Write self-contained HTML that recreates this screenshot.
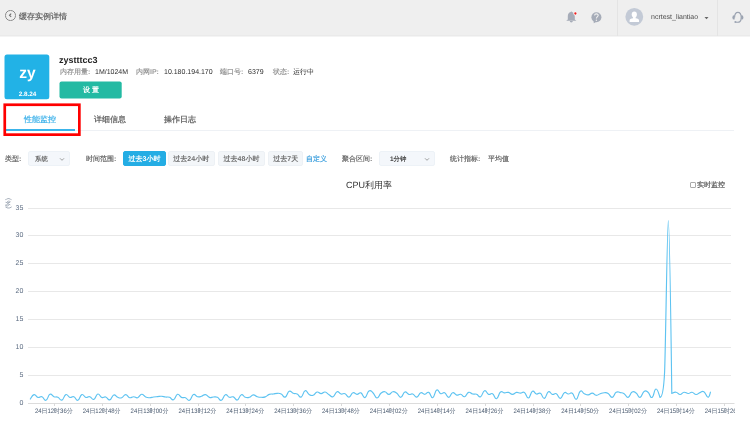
<!DOCTYPE html>
<html><head><meta charset="utf-8">
<style>
*{margin:0;padding:0;box-sizing:border-box}
body>*{will-change:transform}
html,body{text-rendering:geometricPrecision;width:750px;height:436px;overflow:hidden;background:#fff;font-family:"Liberation Sans",sans-serif;color:#333}
.a{position:absolute;white-space:nowrap}
.hdr{position:absolute;left:0;top:0;width:750px;height:37px;background:#efefef;border-bottom:1px solid #f4f4f4;box-shadow:inset 0 -1px 0 #eaeaea}
.vdiv{position:absolute;top:0;width:1px;height:36px;background:#e4e4e4}
.back{position:absolute;left:5px;top:10.3px;width:10.6px;height:10.6px;border:1px solid #8a8a8a;border-radius:50%}
.ttl{left:19px;top:9.6px;font-size:8px;line-height:14px;color:#6e6e6e;font-weight:bold}
.logo{position:absolute;left:4.5px;top:54.4px;width:45px;height:45px;color:#fff;text-align:center}
.logo .zy{position:absolute;left:0;width:45px;top:60px;font-size:16px;font-weight:bold}
.name{left:59.1px;top:55px;font-size:9px;font-weight:bold;color:#222;line-height:11px}
.info{top:68px;font-size:7px;line-height:9px}
.lbl{color:#9c9c9c;font-weight:bold}
.val{color:#2e2e2e}
.btn{position:absolute;left:59.5px;top:81.5px;width:62.2px;height:17px;color:#fff;font-size:7px;text-align:center;line-height:17px;font-weight:bold}
.tab{top:113.7px;font-size:8px;line-height:12px;color:#6a6a6a;font-weight:bold}
.tabline{position:absolute;left:6px;top:130px;width:728.4px;height:1px;background:#eef1f5}
.tabul{position:absolute;left:6px;top:129px;width:68.7px;height:2px;background:#3ab4ea}
.redbox{position:absolute;left:3.4px;top:103.4px;width:77.3px;height:32.6px;border:2.7px solid #f00}
.flt{top:154.5px;font-size:7px;line-height:9px;color:#717171;font-weight:bold}
.sel{position:absolute;top:151px;height:15.4px;background:#f4f7fb;border:1px solid #edf2f7;border-radius:2px}
.tb{position:absolute;top:151.3px;height:14.6px;background:#f3f6f9;border:1px solid #edf1f5;border-radius:2px;font-size:7px;line-height:15px;text-align:center;color:#6e6e6e;font-weight:bold}
.tb.on{background:#24ade4;border-color:#24ade4;color:#fff;font-weight:bold}
.chart{position:absolute;left:0;top:0}
.yl{font-size:7px;fill:#5d6d83}
.xl{font-size:6.4px;fill:#4b5b70}
.yn{font-size:6.8px;fill:#5d6d82}
</style></head><body>
<div class="hdr"></div>
<div class="back"></div>
<svg class="a" style="left:5px;top:10.3px" width="11" height="11" viewBox="0 0 11 11"><path d="M6.2,3.7 L4.5,5.3 L6.2,6.9" fill="none" stroke="#6a6a6a" stroke-width="1.05"/></svg>
<div class="a ttl">缓存实例详情</div>

<!-- header right -->
<svg class="a" style="left:560px;top:5px" width="50" height="25" viewBox="0 0 50 25">
 <path d="M11.3,6.2 L10.7,7 C8.8,7.5 7.8,9 7.8,11.5 L7.8,14.6 L6.2,15.7 L16.4,15.7 L14.8,14.6 L14.8,11.5 C14.8,9 13.8,7.5 11.9,7 Z" fill="#a6acb8"/>
 <path d="M9.9,16 L12.7,16 L12.7,16.8 Q11.3,18 9.9,16.8 Z" fill="#a6acb8"/>
 <circle cx="15.4" cy="8.5" r="2.0" fill="#f7f7f7"/>
 <circle cx="15.4" cy="8.5" r="1.15" fill="#f01c1c"/>
 <circle cx="36.4" cy="12.3" r="5" fill="#a6acb8"/>
 <path d="M33.6,15.5 L33.8,18.2 L36.6,16.8 Z" fill="#a6acb8"/>
 <path d="M34.6,10.4 C34.6,8.3 38.2,8.3 38.2,10.3 C38.2,11.6 36.4,11.8 36.4,13.6" fill="none" stroke="#f0f0f0" stroke-width="1.15"/>
 <circle cx="36.4" cy="15.2" r="0.7" fill="#f0f0f0"/>
</svg>
<div class="vdiv" style="left:616.5px"></div>
<div class="vdiv" style="left:717px"></div>
<svg class="a" style="left:624px;top:7px" width="22" height="22" viewBox="0 0 22 22">
 <circle cx="10.3" cy="9.8" r="8.9" fill="#c3cad6"/>
 <ellipse cx="10.3" cy="7.6" rx="2.6" ry="3.1" fill="#fff"/>
 <path d="M9.1,10 L11.5,10 L11.6,11.3 C13.8,11.7 15,12.2 15,13.3 L15,14.9 L5.6,14.9 L5.6,13.3 C5.6,12.2 6.8,11.7 9,11.3 Z" fill="#fff"/>
</svg>
<div class="a" style="left:650.7px;top:13px;font-size:7px;line-height:10px;color:#4e4e4e">ncrtest_liantiao</div>
<svg class="a" style="left:703px;top:14.5px" width="8" height="6" viewBox="0 0 8 6"><path d="M1.5,2 L5.5,2 L3.5,4.3 Z" fill="#666"/></svg>
<svg class="a" style="left:728px;top:8px" width="20" height="18" viewBox="0 0 20 18">
 <path d="M6.6,9.6 C6.6,2.7 13.2,2.7 13.2,9.6 C13.2,14.6 10.8,14.5 7.6,14.1" fill="none" stroke="#9ba3b1" stroke-width="1.15"/>
 <circle cx="7.3" cy="14" r="0.9" fill="#9ba3b1"/>
 <path d="M6.6,7.2 L6,7.2 Q4.4,7.2 4.4,9.4 Q4.4,11.6 6,11.6 L6.6,11.6 Z" fill="#9ba3b1"/>
 <path d="M13.2,7.2 L13.8,7.2 Q15.4,7.2 15.4,9.4 Q15.4,11.6 13.8,11.6 L13.2,11.6 Z" fill="#9ba3b1"/>
</svg>

<!-- instance -->
<svg class="a" style="left:0;top:0" width="130" height="110" viewBox="0 0 130 110"><rect x="4.5" y="54.4" width="44.8" height="44.9" rx="2.5" fill="#22b2e6"/><rect x="59.5" y="81.5" width="62.2" height="17.1" rx="2" fill="#23baa3"/></svg>
<div class="logo"><div class="a" style="left:0;width:45px;top:9.7px;font-size:15.5px;line-height:20px;font-weight:bold;text-align:center">zy</div>
<div class="a" style="left:0;width:45px;top:36.5px;font-size:6.3px;line-height:8px;font-weight:bold;text-align:center">2.8.24</div></div>
<div class="a name">zystttcc3</div>
<div class="a info lbl" style="left:59.5px">内存用量:</div>
<div class="a info val" style="left:95px">1M/1024M</div>
<div class="a info lbl" style="left:135.9px">内网IP:</div>
<div class="a info val" style="left:163.9px">10.180.194.170</div>
<div class="a info lbl" style="left:220px">端口号:</div>
<div class="a info val" style="left:247.9px">6379</div>
<div class="a info lbl" style="left:272.7px">状态:</div>
<div class="a info val" style="left:293.2px">运行中</div>
<div class="btn">设&nbsp;置</div>

<!-- tabs -->
<div class="tabline"></div>
<div class="a tab" style="left:23.7px;color:#4db8ec">性能监控</div>
<div class="a tab" style="left:93.6px">详细信息</div>
<div class="a tab" style="left:163.6px">操作日志</div>
<div class="tabul"></div>
<svg class="a" style="left:0;top:95px" width="100" height="50" viewBox="0 95 100 50"><rect x="4.75" y="104.75" width="74.6" height="29.9" fill="none" stroke="#ff0000" stroke-width="2.7"/></svg>

<!-- filters -->
<div class="a flt" style="left:4.8px">类型:</div>
<div class="sel" style="left:28px;width:42.4px"></div>
<div class="a flt" style="left:34.8px;top:154.5px;font-size:6.4px;color:#707070">系统</div>
<svg class="a" style="left:59.3px;top:157px" width="6" height="5" viewBox="0 0 6 5"><path d="M1,1.3 L3,3.3 L5,1.3" fill="none" stroke="#888" stroke-width="0.8"/></svg>
<div class="a flt" style="left:85.5px">时间范围:</div>
<div class="tb on" style="left:123px;width:43px">过去3小时</div>
<div class="tb" style="left:168.4px;width:46.5px">过去24小时</div>
<div class="tb" style="left:217.8px;width:47px">过去48小时</div>
<div class="tb" style="left:267.5px;width:35.4px">过去7天</div>
<div class="a flt" style="left:306px;color:#4aa6e0">自定义</div>
<div class="a flt" style="left:342.2px">聚合区间:</div>
<div class="sel" style="left:378.9px;width:56.3px"></div>
<div class="a flt" style="left:390.2px;top:154.5px;font-size:6.4px;color:#4a4a4a">1分钟</div>
<svg class="a" style="left:423.5px;top:157px" width="6" height="5" viewBox="0 0 6 5"><path d="M1,1.3 L3,3.3 L5,1.3" fill="none" stroke="#888" stroke-width="0.8"/></svg>
<div class="a flt" style="left:450px">统计指标:</div>
<div class="a flt" style="left:488px">平均值</div>

<!-- chart title -->
<div class="a" style="left:346.3px;top:179px;font-size:9px;line-height:12px;color:#333">CPU利用率</div>
<div class="a" style="left:690.4px;top:181.9px;width:5.8px;height:5.9px;border:0.8px solid #aaa;border-radius:1px;background:#fff"></div>
<div class="a" style="left:696.8px;top:179.8px;font-size:7px;line-height:11px;color:#6a6a6a;font-weight:bold">实时监控</div>

<svg class="chart" width="750" height="436" viewBox="0 0 750 436">
<defs><clipPath id="cp"><rect x="0" y="190" width="735" height="246"/></clipPath></defs>
<g clip-path="url(#cp)">
<line x1="28" y1="403.50" x2="734.5" y2="403.50" stroke="#dcdcdc" stroke-width="1"/><text x="23.3" y="405.00" text-anchor="end" class="yl">0</text><line x1="28" y1="375.50" x2="731.0" y2="375.50" stroke="#e8e8e8" stroke-width="1"/><text x="23.3" y="377.00" text-anchor="end" class="yl">5</text><line x1="28" y1="347.50" x2="731.0" y2="347.50" stroke="#e8e8e8" stroke-width="1"/><text x="23.3" y="349.00" text-anchor="end" class="yl">10</text><line x1="28" y1="319.50" x2="731.0" y2="319.50" stroke="#e8e8e8" stroke-width="1"/><text x="23.3" y="321.00" text-anchor="end" class="yl">15</text><line x1="28" y1="291.50" x2="731.0" y2="291.50" stroke="#e8e8e8" stroke-width="1"/><text x="23.3" y="293.00" text-anchor="end" class="yl">20</text><line x1="28" y1="263.50" x2="731.0" y2="263.50" stroke="#e8e8e8" stroke-width="1"/><text x="23.3" y="265.00" text-anchor="end" class="yl">25</text><line x1="28" y1="235.50" x2="731.0" y2="235.50" stroke="#e8e8e8" stroke-width="1"/><text x="23.3" y="237.00" text-anchor="end" class="yl">30</text><line x1="28" y1="208.50" x2="731.0" y2="208.50" stroke="#e8e8e8" stroke-width="1"/><text x="23.3" y="210.00" text-anchor="end" class="yl">35</text>
<line x1="54.50" y1="403.5" x2="54.50" y2="406" stroke="#d9d9d9" stroke-width="1"/><text x="53.80" y="413.4" text-anchor="middle" class="xl" textLength="37.8" lengthAdjust="spacingAndGlyphs">24日12时36分</text><line x1="102.50" y1="403.5" x2="102.50" y2="406" stroke="#d9d9d9" stroke-width="1"/><text x="101.65" y="413.4" text-anchor="middle" class="xl" textLength="37.8" lengthAdjust="spacingAndGlyphs">24日12时48分</text><line x1="150.50" y1="403.5" x2="150.50" y2="406" stroke="#d9d9d9" stroke-width="1"/><text x="149.50" y="413.4" text-anchor="middle" class="xl" textLength="37.8" lengthAdjust="spacingAndGlyphs">24日13时00分</text><line x1="198.50" y1="403.5" x2="198.50" y2="406" stroke="#d9d9d9" stroke-width="1"/><text x="197.35" y="413.4" text-anchor="middle" class="xl" textLength="37.8" lengthAdjust="spacingAndGlyphs">24日13时12分</text><line x1="245.50" y1="403.5" x2="245.50" y2="406" stroke="#d9d9d9" stroke-width="1"/><text x="245.20" y="413.4" text-anchor="middle" class="xl" textLength="37.8" lengthAdjust="spacingAndGlyphs">24日13时24分</text><line x1="293.50" y1="403.5" x2="293.50" y2="406" stroke="#d9d9d9" stroke-width="1"/><text x="293.05" y="413.4" text-anchor="middle" class="xl" textLength="37.8" lengthAdjust="spacingAndGlyphs">24日13时36分</text><line x1="341.50" y1="403.5" x2="341.50" y2="406" stroke="#d9d9d9" stroke-width="1"/><text x="340.90" y="413.4" text-anchor="middle" class="xl" textLength="37.8" lengthAdjust="spacingAndGlyphs">24日13时48分</text><line x1="389.50" y1="403.5" x2="389.50" y2="406" stroke="#d9d9d9" stroke-width="1"/><text x="388.75" y="413.4" text-anchor="middle" class="xl" textLength="37.8" lengthAdjust="spacingAndGlyphs">24日14时02分</text><line x1="437.50" y1="403.5" x2="437.50" y2="406" stroke="#d9d9d9" stroke-width="1"/><text x="436.60" y="413.4" text-anchor="middle" class="xl" textLength="37.8" lengthAdjust="spacingAndGlyphs">24日14时14分</text><line x1="485.50" y1="403.5" x2="485.50" y2="406" stroke="#d9d9d9" stroke-width="1"/><text x="484.45" y="413.4" text-anchor="middle" class="xl" textLength="37.8" lengthAdjust="spacingAndGlyphs">24日14时26分</text><line x1="533.50" y1="403.5" x2="533.50" y2="406" stroke="#d9d9d9" stroke-width="1"/><text x="532.30" y="413.4" text-anchor="middle" class="xl" textLength="37.8" lengthAdjust="spacingAndGlyphs">24日14时38分</text><line x1="580.50" y1="403.5" x2="580.50" y2="406" stroke="#d9d9d9" stroke-width="1"/><text x="580.15" y="413.4" text-anchor="middle" class="xl" textLength="37.8" lengthAdjust="spacingAndGlyphs">24日14时50分</text><line x1="628.50" y1="403.5" x2="628.50" y2="406" stroke="#d9d9d9" stroke-width="1"/><text x="628.00" y="413.4" text-anchor="middle" class="xl" textLength="37.8" lengthAdjust="spacingAndGlyphs">24日15时02分</text><line x1="676.50" y1="403.5" x2="676.50" y2="406" stroke="#d9d9d9" stroke-width="1"/><text x="675.85" y="413.4" text-anchor="middle" class="xl" textLength="37.8" lengthAdjust="spacingAndGlyphs">24日15时14分</text><line x1="724.50" y1="403.5" x2="724.50" y2="406" stroke="#d9d9d9" stroke-width="1"/><text x="723.70" y="413.4" text-anchor="middle" class="xl" textLength="37.8" lengthAdjust="spacingAndGlyphs">24日15时26分</text>
<path d="M30.00,399.40 C31.00,398.20 31.99,395.10 33.99,394.60 C35.98,394.10 35.98,396.88 37.98,397.40 C39.97,397.92 39.97,395.97 41.96,396.70 C43.96,397.43 43.96,400.90 45.95,400.30 C47.94,399.70 47.94,395.20 49.94,394.30 C51.93,393.40 51.93,395.95 53.92,396.70 C55.92,397.45 55.92,396.45 57.91,397.30 C59.91,398.15 59.91,400.78 61.90,400.10 C63.89,399.43 63.89,395.28 65.89,394.60 C67.88,393.93 67.88,396.88 69.88,397.40 C71.87,397.92 71.87,395.97 73.86,396.70 C75.86,397.43 75.86,400.82 77.85,400.30 C79.84,399.78 79.84,395.33 81.84,394.60 C83.83,393.88 83.83,396.88 85.82,397.40 C87.82,397.92 87.82,396.20 89.81,396.70 C91.81,397.20 91.81,400.07 93.80,399.40 C95.79,398.72 95.79,394.50 97.79,394.00 C99.78,393.50 99.78,396.65 101.77,397.40 C103.77,398.15 103.77,396.38 105.76,397.00 C107.76,397.62 107.76,400.40 109.75,399.90 C111.74,399.40 111.74,395.65 113.74,395.00 C115.73,394.35 115.73,396.62 117.72,397.30 C119.72,397.98 119.72,398.38 121.71,397.70 C123.71,397.02 123.71,394.60 125.70,394.60 C127.69,394.60 127.69,397.18 129.69,397.70 C131.68,398.22 131.68,396.70 133.68,396.70 C135.67,396.70 135.67,398.30 137.66,397.70 C139.66,397.10 139.66,394.48 141.65,394.30 C143.64,394.12 143.64,396.15 145.64,397.00 C147.63,397.85 147.63,397.70 149.62,397.70 C151.62,397.70 151.62,397.27 153.61,397.00 C155.61,396.73 155.61,396.78 157.60,396.60 C159.59,396.43 159.59,396.20 161.59,396.30 C163.58,396.40 163.58,396.75 165.57,397.00 C167.57,397.25 167.57,396.62 169.56,397.30 C171.56,397.98 171.56,400.45 173.55,399.70 C175.54,398.95 175.54,394.88 177.54,394.30 C179.53,393.73 179.53,396.55 181.53,397.40 C183.52,398.25 183.52,396.97 185.51,397.70 C187.51,398.43 187.51,401.07 189.50,400.30 C191.49,399.53 191.49,395.50 193.49,394.60 C195.48,393.70 195.48,396.27 197.47,396.70 C199.47,397.12 199.47,396.82 201.46,396.30 C203.46,395.78 203.46,394.33 205.45,394.60 C207.44,394.88 207.44,396.80 209.44,397.40 C211.43,398.00 211.43,397.02 213.42,397.00 C215.42,396.98 215.42,396.48 217.41,397.30 C219.41,398.12 219.41,400.95 221.40,400.30 C223.39,399.65 223.39,395.45 225.39,394.70 C227.38,393.95 227.38,396.75 229.38,397.30 C231.37,397.85 231.37,396.22 233.36,396.90 C235.36,397.57 235.36,400.55 237.35,400.00 C239.34,399.45 239.34,395.38 241.34,394.70 C243.33,394.02 243.33,396.65 245.32,397.30 C247.32,397.95 247.32,397.90 249.31,397.30 C251.31,396.70 251.31,395.05 253.30,394.90 C255.29,394.75 255.29,396.10 257.29,396.70 C259.28,397.30 259.28,397.25 261.27,397.30 C263.27,397.35 263.27,397.62 265.26,396.90 C267.26,396.17 267.26,395.12 269.25,394.40 C271.24,393.67 271.24,394.27 273.24,394.00 C275.23,393.73 275.23,393.30 277.23,393.30 C279.22,393.30 279.22,393.05 281.21,394.00 C283.21,394.95 283.21,397.78 285.20,397.10 C287.19,396.43 287.19,392.25 289.19,391.30 C291.18,390.35 291.18,392.62 293.18,393.30 C295.17,393.98 295.17,393.05 297.16,394.00 C299.16,394.95 299.16,397.93 301.15,397.10 C303.14,396.28 303.14,391.38 305.14,390.70 C307.13,390.02 307.13,393.25 309.12,394.40 C311.12,395.55 311.12,395.90 313.11,395.30 C315.11,394.70 315.11,392.43 317.10,392.00 C319.09,391.57 319.09,393.60 321.09,393.60 C323.08,393.60 323.08,391.73 325.07,392.00 C327.07,392.27 327.07,393.52 329.06,394.70 C331.06,395.88 331.06,397.45 333.05,396.70 C335.04,395.95 335.04,392.38 337.04,391.70 C339.03,391.02 339.03,393.50 341.02,394.00 C343.02,394.50 343.02,392.92 345.01,393.70 C347.01,394.48 347.01,397.35 349.00,397.10 C350.99,396.85 350.99,393.38 352.99,392.70 C354.98,392.02 354.98,394.35 356.97,394.40 C358.97,394.45 358.97,392.10 360.96,392.90 C362.96,393.70 362.96,398.10 364.95,397.60 C366.94,397.10 366.94,392.12 368.94,390.90 C370.93,389.67 370.93,390.92 372.93,392.70 C374.92,394.48 374.92,397.85 376.91,398.00 C378.91,398.15 378.91,394.88 380.90,393.30 C382.89,391.73 382.89,391.43 384.89,391.70 C386.88,391.97 386.88,394.40 388.88,394.40 C390.87,394.40 390.87,391.97 392.86,391.70 C394.86,391.43 394.86,391.90 396.85,393.30 C398.84,394.70 398.84,397.62 400.84,397.30 C402.83,396.98 402.83,392.73 404.82,392.00 C406.82,391.27 406.82,393.90 408.81,394.40 C410.81,394.90 410.81,393.32 412.80,394.00 C414.79,394.68 414.79,397.43 416.79,397.10 C418.78,396.78 418.78,393.40 420.77,392.70 C422.77,392.00 422.77,394.38 424.76,394.30 C426.76,394.23 426.76,391.55 428.75,392.40 C430.74,393.25 430.74,398.30 432.74,397.70 C434.73,397.10 434.73,391.00 436.72,390.00 C438.72,389.00 438.72,393.02 440.71,393.70 C442.71,394.38 442.71,391.80 444.70,392.70 C446.69,393.60 446.69,397.30 448.69,397.30 C450.68,397.30 450.68,393.25 452.67,392.70 C454.67,392.15 454.67,394.70 456.66,395.10 C458.66,395.50 458.66,393.90 460.65,394.30 C462.64,394.70 462.64,397.18 464.64,396.70 C466.63,396.22 466.63,393.07 468.62,392.40 C470.62,391.72 470.62,393.52 472.61,394.00 C474.61,394.48 474.61,393.62 476.60,394.30 C478.59,394.98 478.59,397.60 480.59,396.70 C482.58,395.80 482.58,391.27 484.57,390.70 C486.57,390.12 486.57,393.65 488.56,394.40 C490.56,395.15 490.56,392.62 492.55,393.70 C494.54,394.77 494.54,399.12 496.54,398.70 C498.53,398.27 498.53,393.45 500.52,392.00 C502.52,390.55 502.52,392.80 504.51,392.90 C506.51,393.00 506.51,392.02 508.50,392.40 C510.49,392.77 510.49,394.40 512.49,394.40 C514.48,394.40 514.48,392.72 516.47,392.40 C518.47,392.07 518.47,393.10 520.46,393.10 C522.46,393.10 522.46,391.17 524.45,392.40 C526.44,393.62 526.44,398.27 528.44,398.00 C530.43,397.73 530.43,392.30 532.42,391.30 C534.42,390.30 534.42,393.50 536.41,394.00 C538.41,394.50 538.41,392.20 540.40,393.30 C542.39,394.40 542.39,398.80 544.39,398.40 C546.38,398.00 546.38,392.70 548.38,391.70 C550.37,390.70 550.37,393.90 552.36,394.40 C554.36,394.90 554.36,392.70 556.35,393.70 C558.34,394.70 558.34,398.65 560.34,398.40 C562.33,398.15 562.33,393.80 564.32,392.70 C566.32,391.60 566.32,393.85 568.31,394.00 C570.31,394.15 570.31,391.98 572.30,393.30 C574.29,394.62 574.29,399.80 576.29,399.30 C578.28,398.80 578.28,392.70 580.27,391.30 C582.27,389.90 582.27,392.80 584.26,393.70 C586.26,394.60 586.26,395.05 588.25,394.90 C590.24,394.75 590.24,393.00 592.24,393.10 C594.23,393.20 594.23,395.15 596.23,395.30 C598.22,395.45 598.22,394.35 600.21,393.70 C602.21,393.05 602.21,392.77 604.20,392.70 C606.19,392.62 606.19,392.22 608.19,393.40 C610.18,394.57 610.18,397.67 612.17,397.40 C614.17,397.12 614.17,393.50 616.16,392.30 C618.16,391.10 618.16,392.25 620.15,392.60 C622.14,392.95 622.14,392.50 624.14,393.70 C626.13,394.90 626.13,397.80 628.12,397.40 C630.12,397.00 630.12,393.20 632.11,392.10 C634.11,391.00 634.11,391.68 636.10,393.00 C638.09,394.32 638.09,397.80 640.09,397.40 C642.08,397.00 642.08,392.67 644.07,391.40 C646.07,390.12 646.07,390.80 648.06,392.30 C650.06,393.80 650.06,398.22 652.05,397.40 C654.04,396.57 654.04,389.00 656.04,389.00 C658.03,389.00 659.03,395.30 660.02,397.40 C661.82,397.40 663.60,392.00 664.60,372.00 C665.60,350.00 667.20,220.50 668.30,220.50 C669.40,220.50 671.00,330.00 671.80,393.40 C672.85,393.10 673.92,391.92 676.00,392.20 C678.08,392.48 678.10,394.48 680.10,394.50 C682.10,394.52 681.98,392.55 684.00,392.30 C686.02,392.05 686.20,393.50 688.20,393.50 C690.20,393.50 690.02,392.05 692.00,392.30 C693.98,392.55 694.10,394.43 696.10,394.50 C698.10,394.57 698.05,393.30 700.00,392.60 C701.95,391.90 701.90,390.52 703.90,391.70 C705.90,392.88 706.33,397.27 708.00,397.30 C709.67,397.33 709.95,393.18 710.60,391.80" fill="none" stroke="#5ec3f1" stroke-width="1.15" stroke-linejoin="round"/>
</g>
<text transform="translate(10.3,203.4) rotate(-89.7)" text-anchor="middle" class="yn">(%)</text>
</svg>
</body></html>
